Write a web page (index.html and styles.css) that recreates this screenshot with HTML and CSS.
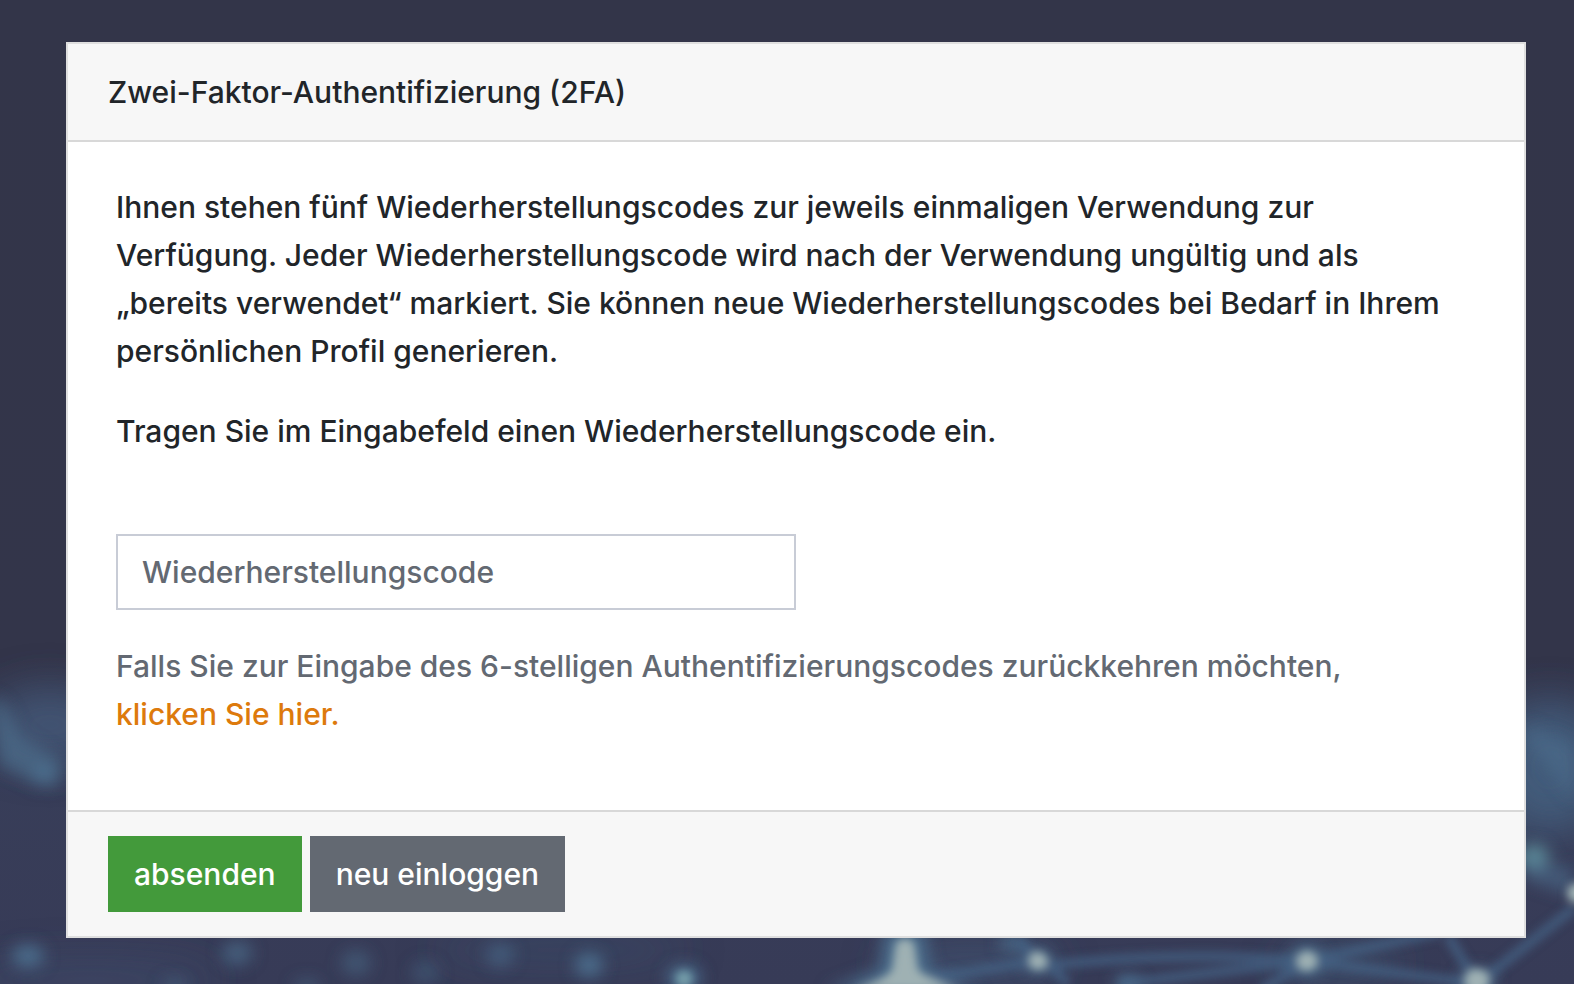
FILE: index.html
```
<!DOCTYPE html>
<html lang="de">
<head>
<meta charset="utf-8">
<meta name="viewport" content="width=device-width, initial-scale=1">
<title>Zwei-Faktor-Authentifizierung (2FA)</title>
<link rel="stylesheet" href="styles.css">
</head>
<body>
<svg class="backdrop" viewBox="0 0 1574 984" preserveAspectRatio="xMidYMid slice" aria-hidden="true">
  <defs>
    <filter id="haze" x="-50%" y="-50%" width="200%" height="200%"><feGaussianBlur stdDeviation="20"/></filter>
    <filter id="soft" x="-50%" y="-50%" width="200%" height="200%"><feGaussianBlur stdDeviation="8"/></filter>
    <filter id="fine" filterUnits="userSpaceOnUse" x="0" y="600" width="1574" height="400"><feGaussianBlur stdDeviation="4"/></filter>
    <linearGradient id="base" x1="0" y1="0" x2="0" y2="1">
      <stop offset="0" stop-color="#333549"/>
      <stop offset="0.67" stop-color="#33354a"/>
      <stop offset="0.76" stop-color="#383e59"/>
      <stop offset="1" stop-color="#373b57"/>
    </linearGradient>
  </defs>
  <rect width="1574" height="984" fill="url(#base)"/>
  <g filter="url(#haze)" fill="#435b7a">
    <ellipse cx="50" cy="725" rx="60" ry="36" opacity="0.8"/>
    <ellipse cx="1550" cy="768" rx="60" ry="65"/>
    <ellipse cx="1340" cy="965" rx="60" ry="22" opacity="0.5"/>
    <ellipse cx="970" cy="965" rx="90" ry="20" opacity="0.6"/>
    <ellipse cx="90" cy="980" rx="130" ry="18" opacity="0.4"/>
    <ellipse cx="560" cy="950" rx="130" ry="18" opacity="0.3"/>
  </g>
  <g filter="url(#soft)" fill="#4c6d8c">
    <path d="M-10 695 L5 705 L20 735 L62 762 L58 785 L40 785 L0 765 Z" opacity="0.7"/>
    <ellipse cx="44" cy="774" rx="12" ry="11"/>
    <ellipse cx="28" cy="956" rx="16" ry="11"/>
    <ellipse cx="237" cy="953" rx="15" ry="12" opacity="0.7"/>
    <ellipse cx="356" cy="963" rx="15" ry="13" opacity="0.5"/>
    <ellipse cx="425" cy="973" rx="14" ry="12" opacity="0.4"/>
    <ellipse cx="500" cy="955" rx="14" ry="12" opacity="0.6"/>
    <ellipse cx="175" cy="986" rx="14" ry="7" opacity="0.5"/>
    <ellipse cx="307" cy="986" rx="14" ry="7" opacity="0.5"/>
    <ellipse cx="589" cy="965" rx="14" ry="12"/>
    <ellipse cx="684" cy="978" rx="17" ry="13"/>
    <ellipse cx="1012" cy="943" rx="12" ry="8"/>
    <ellipse cx="1038" cy="961" rx="14" ry="12"/>
    <ellipse cx="1128" cy="984" rx="13" ry="9"/>
    <ellipse cx="1307" cy="961" rx="18" ry="15"/>
    <ellipse cx="1477" cy="982" rx="18" ry="13"/>
    <path d="M1526 725 L1574 745 V800 L1526 740 Z" opacity="0.6"/>
    <ellipse cx="1534" cy="858" rx="15" ry="14" fill="#5a8796"/>
    <path d="M1526 860 L1574 868 V896 L1526 880 Z" opacity="0.6"/>
    <path d="M885 930 H925 L930 970 L980 990 H825 L880 970 Z"/>
  </g>
  <g filter="url(#fine)">
    <g class="strands">
      <path d="M930 978 L1038 961 L1018 940"/>
      <path d="M1045 961 L1068 984"/>
      <path d="M1044 966 Q1180 950 1307 961 L1477 984 L1448 936"/>
      <path d="M1307 961 L1262 990"/>
      <path d="M1307 961 L1440 932"/>
      <path d="M1120 984 L1307 961"/>
      <path d="M1477 984 L1574 908"/>
    </g>
    <g fill="#9fb1b3">
      <path d="M896 943 Q905 934 914 943 L918 970 Q930 980 960 990 H850 Q885 980 892 970 Z"/>
      <circle cx="1038" cy="961" r="9"/>
      <circle cx="1307" cy="961" r="10"/>
      <circle cx="1477" cy="981" r="12"/>
      <circle cx="1577" cy="893" r="10"/>
      <circle cx="684" cy="979" r="8" fill="#77a0ab"/>
    </g>
  </g>
</svg>
<main class="page">
  <form class="card">
    <h1 class="card-header">Zwei-Faktor-Authentifizierung (2FA)</h1>
    <div class="card-body">
      <p class="text">Ihnen stehen fünf Wiederherstellungscodes zur jeweils einmaligen Verwendung zur Verfügung. Jeder Wiederherstellungscode wird nach der Verwendung ungültig und als „bereits verwendet“ markiert. Sie können neue Wiederherstellungscodes bei Bedarf in Ihrem persönlichen Profil generieren.</p>
      <p class="text">Tragen Sie im Eingabefeld einen Wiederherstellungscode ein.</p>
      <input class="code-input" type="text" name="code" placeholder="Wiederherstellungscode" aria-label="Wiederherstellungscode">
      <p class="hint">Falls Sie zur Eingabe des 6-stelligen Authentifizierungscodes zurückkehren möchten,<br><a class="link" href="#">klicken Sie hier.</a></p>
    </div>
    <div class="card-footer">
      <button class="btn btn-submit" type="submit">absenden</button>
      <button class="btn btn-login" type="button">neu einloggen</button>
    </div>
  </form>
</main>
</body>
</html>
```
FILE: styles.css
```
* {
  box-sizing: border-box;
}

body {
  margin: 0;
  min-height: 100vh;
  background: #33354a;
  color: #212529;
  font-family: Inter, "Liberation Sans", sans-serif;
  font-size: 30px;
  font-weight: 450;
  line-height: 48px;
}

.backdrop {
  position: fixed;
  inset: 0;
  z-index: -1;
  width: 100%;
  height: 100%;
}

.strands {
  fill: none;
  stroke: #46688a;
  stroke-width: 10px;
  opacity: 0.65;
}

.page {
  padding: 42px 48px 46px 66px;
}

.card {
  background: #fff;
  border: 2px solid #dfdfdf;
}

.card-header {
  margin: 0;
  padding: 24px 40px;
  background: #f7f7f7;
  border-bottom: 2px solid #d8d8d8;
  font-size: inherit;
  font-weight: inherit;
}

.card-body {
  padding: 41px 64px 72px 48px;
}

.text {
  margin: 0 0 32px;
}

.code-input {
  display: block;
  width: 680px;
  max-width: 100%;
  height: 76px;
  margin-top: 79px;
  padding: 12px 24px;
  border: 2px solid #c8ccd6;
  border-radius: 0;
  background: #fff;
  color: #495057;
  font: inherit;
}

.code-input::placeholder {
  color: #636972;
  opacity: 1;
}

.hint {
  margin: 32px 0 0;
  color: #636972;
}

.link {
  color: #dd7a0c;
  text-decoration: none;
}

.card-footer {
  display: flex;
  gap: 8px;
  padding: 24px 40px;
  background: #f7f7f7;
  border-top: 2px solid #d8d8d8;
}

.btn {
  padding: 14px 26px;
  border: 0;
  color: #fff;
  font: inherit;
}

.btn-submit {
  background: #439a3b;
}

.btn-login {
  background: #636972;
}
```
